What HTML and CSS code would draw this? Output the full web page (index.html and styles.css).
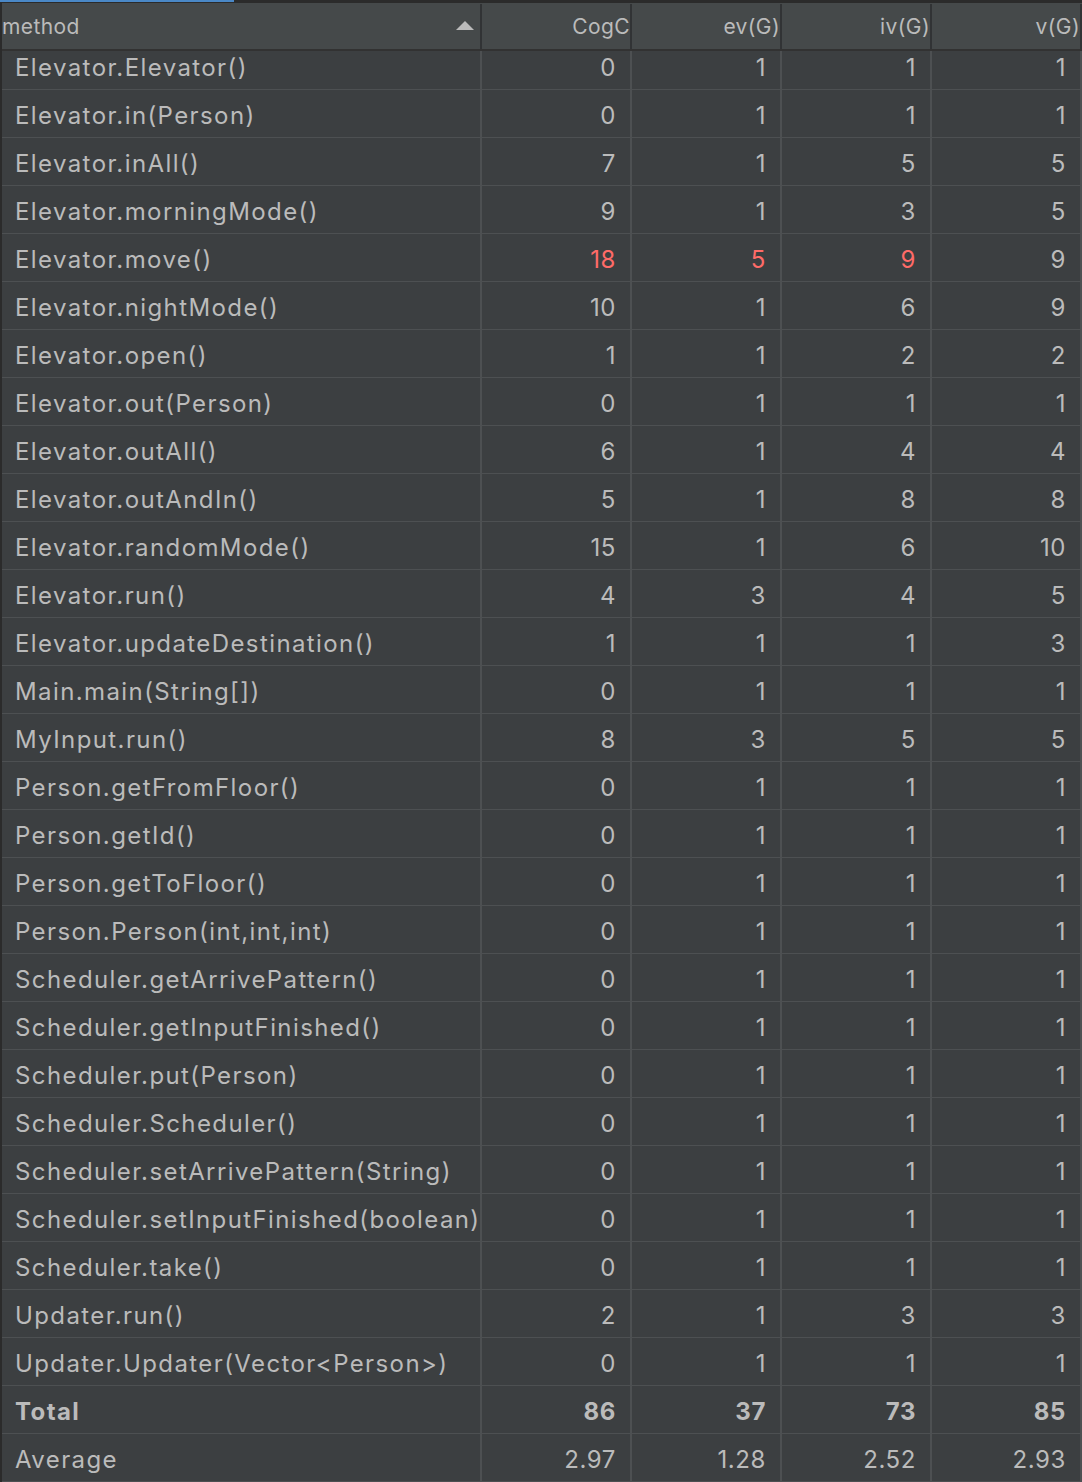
FILE: index.html
```html
<!DOCTYPE html>
<html>
<head>
<meta charset="utf-8">
<link rel="stylesheet" href="styles.css">
</head>
<body>
<div class="panel">
  <div class="tabstrip"><div class="tab-indicator"></div></div>
  <div class="table">
    <div class="head">
      <div class="hcell first">method<span class="sort"></span></div>
      <div class="hcell">CogC</div>
      <div class="hcell">ev(G)</div>
      <div class="hcell">iv(G)</div>
      <div class="hcell">v(G)</div>
    </div>
    <div class="bodywrap">
      <div class="rows">
        <div class="row"><div class="c m">Elevator.Elevator()</div><div class="c">0</div><div class="c">1</div><div class="c">1</div><div class="c">1</div></div>
        <div class="row"><div class="c m">Elevator.in(Person)</div><div class="c">0</div><div class="c">1</div><div class="c">1</div><div class="c">1</div></div>
        <div class="row"><div class="c m">Elevator.inAll()</div><div class="c">7</div><div class="c">1</div><div class="c">5</div><div class="c">5</div></div>
        <div class="row"><div class="c m">Elevator.morningMode()</div><div class="c">9</div><div class="c">1</div><div class="c">3</div><div class="c">5</div></div>
        <div class="row"><div class="c m">Elevator.move()</div><div class="c red">18</div><div class="c red">5</div><div class="c red">9</div><div class="c">9</div></div>
        <div class="row"><div class="c m">Elevator.nightMode()</div><div class="c">10</div><div class="c">1</div><div class="c">6</div><div class="c">9</div></div>
        <div class="row"><div class="c m">Elevator.open()</div><div class="c">1</div><div class="c">1</div><div class="c">2</div><div class="c">2</div></div>
        <div class="row"><div class="c m">Elevator.out(Person)</div><div class="c">0</div><div class="c">1</div><div class="c">1</div><div class="c">1</div></div>
        <div class="row"><div class="c m">Elevator.outAll()</div><div class="c">6</div><div class="c">1</div><div class="c">4</div><div class="c">4</div></div>
        <div class="row"><div class="c m">Elevator.outAndIn()</div><div class="c">5</div><div class="c">1</div><div class="c">8</div><div class="c">8</div></div>
        <div class="row"><div class="c m">Elevator.randomMode()</div><div class="c">15</div><div class="c">1</div><div class="c">6</div><div class="c">10</div></div>
        <div class="row"><div class="c m">Elevator.run()</div><div class="c">4</div><div class="c">3</div><div class="c">4</div><div class="c">5</div></div>
        <div class="row"><div class="c m">Elevator.updateDestination()</div><div class="c">1</div><div class="c">1</div><div class="c">1</div><div class="c">3</div></div>
        <div class="row"><div class="c m">Main.main(String[])</div><div class="c">0</div><div class="c">1</div><div class="c">1</div><div class="c">1</div></div>
        <div class="row"><div class="c m">MyInput.run()</div><div class="c">8</div><div class="c">3</div><div class="c">5</div><div class="c">5</div></div>
        <div class="row"><div class="c m">Person.getFromFloor()</div><div class="c">0</div><div class="c">1</div><div class="c">1</div><div class="c">1</div></div>
        <div class="row"><div class="c m">Person.getId()</div><div class="c">0</div><div class="c">1</div><div class="c">1</div><div class="c">1</div></div>
        <div class="row"><div class="c m">Person.getToFloor()</div><div class="c">0</div><div class="c">1</div><div class="c">1</div><div class="c">1</div></div>
        <div class="row"><div class="c m">Person.Person(int,int,int)</div><div class="c">0</div><div class="c">1</div><div class="c">1</div><div class="c">1</div></div>
        <div class="row"><div class="c m">Scheduler.getArrivePattern()</div><div class="c">0</div><div class="c">1</div><div class="c">1</div><div class="c">1</div></div>
        <div class="row"><div class="c m">Scheduler.getInputFinished()</div><div class="c">0</div><div class="c">1</div><div class="c">1</div><div class="c">1</div></div>
        <div class="row"><div class="c m">Scheduler.put(Person)</div><div class="c">0</div><div class="c">1</div><div class="c">1</div><div class="c">1</div></div>
        <div class="row"><div class="c m">Scheduler.Scheduler()</div><div class="c">0</div><div class="c">1</div><div class="c">1</div><div class="c">1</div></div>
        <div class="row"><div class="c m">Scheduler.setArrivePattern(String)</div><div class="c">0</div><div class="c">1</div><div class="c">1</div><div class="c">1</div></div>
        <div class="row"><div class="c m">Scheduler.setInputFinished(boolean)</div><div class="c">0</div><div class="c">1</div><div class="c">1</div><div class="c">1</div></div>
        <div class="row"><div class="c m">Scheduler.take()</div><div class="c">0</div><div class="c">1</div><div class="c">1</div><div class="c">1</div></div>
        <div class="row"><div class="c m">Updater.run()</div><div class="c">2</div><div class="c">1</div><div class="c">3</div><div class="c">3</div></div>
        <div class="row"><div class="c m">Updater.Updater(Vector&lt;Person&gt;)</div><div class="c">0</div><div class="c">1</div><div class="c">1</div><div class="c">1</div></div>
        <div class="row total"><div class="c m">Total</div><div class="c">86</div><div class="c">37</div><div class="c">73</div><div class="c">85</div></div>
        <div class="row"><div class="c m">Average</div><div class="c">2.97</div><div class="c">1.28</div><div class="c">2.52</div><div class="c">2.93</div></div>
      </div>
    </div>
  </div>
</div>
</body>
</html>
```
FILE: styles.css
```css
html, body {
  margin: 0;
  padding: 0;
  background: #2b2b2b;
}
.panel {
  width: 1082px;
  height: 1482px;
  overflow: hidden;
  background: #2b2b2b;
  font-family: "Inter", "Open Sans", "DejaVu Sans", sans-serif;
  color: #bbbbbb;
}
.tabstrip {
  height: 3px;
  background: #2b2b2b;
}
.tab-indicator {
  width: 234px;
  height: 2px;
  background: #4a88c7;
}
.table {
  margin-left: 2px;
}
.head {
  display: grid;
  grid-template-columns: 480px repeat(4, 150px);
  height: 46px;
  background: #45494a;
  border-bottom: 2px solid #323232;
}
.hcell {
  margin: 1px 0 2px 0;
  border-right: 2px solid #313335;
  font-size: 21px;
  line-height: 45px;
  text-align: right;
  letter-spacing: 0.4px;
}
.hcell.first {
  text-align: left;
  display: flex;
  align-items: center;
  justify-content: space-between;
  padding-right: 6px;
}
.sort {
  width: 0;
  height: 0;
  margin-top: -2px;
  border-left: 9px solid transparent;
  border-right: 9px solid transparent;
  border-bottom: 9px solid #bbbbbb;
}
.bodywrap {
  height: 1431px;
  overflow: hidden;
  background: #3c3f41;
}
.rows {
  margin-top: -9px;
}
.row {
  display: grid;
  grid-template-columns: 480px repeat(4, 150px);
  height: 47px;
  border-bottom: 1px solid #4d5052;
}
.c {
  border-right: 2px solid #4d5052;
  font-size: 24px;
  padding-top: 4px;
  line-height: 43px;
  text-align: right;
  padding-right: 14px;
  letter-spacing: 0.6px;
  white-space: nowrap;
}
.c.m {
  text-align: left;
  padding-left: 13px;
  padding-right: 0;
  letter-spacing: 1.4px;
}
.red {
  color: #ff6b68;
}
.total .c {
  font-weight: 700;
}
```
